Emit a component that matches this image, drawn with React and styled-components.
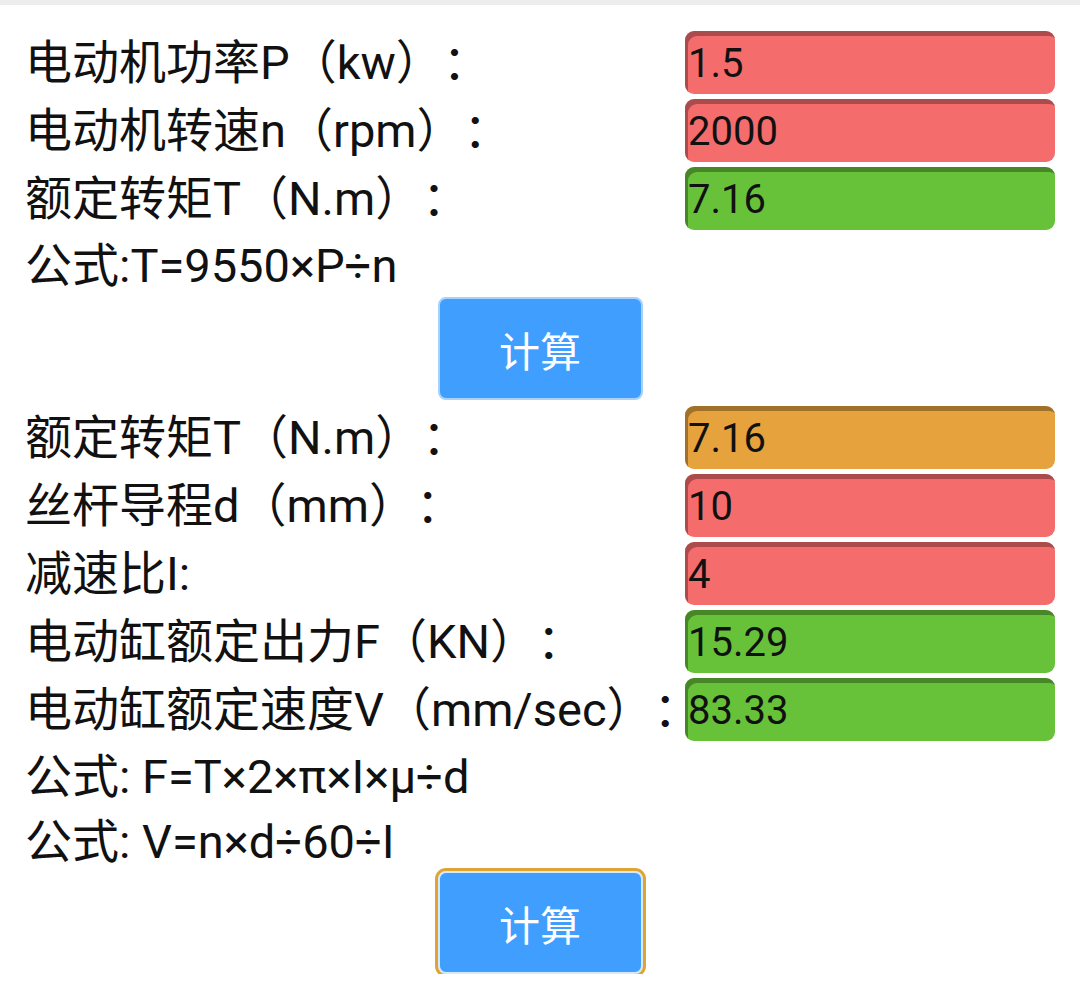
import React from "react";
import styled, { createGlobalStyle } from "styled-components";

const GlobalStyle = createGlobalStyle`
  body {
    margin: 0;
    background: #fff;
    font-family: Roboto, "Noto Sans CJK SC", sans-serif;
    color: #111;
    text-spacing-trim: space-all;
  }
`;

const tones = {
  danger: "#f56c6c",
  success: "#67c23a",
  warning: "#e6a23c",
};

const TopStrip = styled.div`
  height: 5px;
  background: #ededed;
`;

const Page = styled.div`
  padding: 26px 25px 0 25px;
`;

const Section = styled.div`
  display: grid;
  grid-template-columns: 660px 370px;
  row-gap: 5px;
`;

const Label = styled.div`
  font-size: 47px;
  line-height: 63px;
  height: 63px;
  white-space: nowrap;
  color: #111;
  text-spacing-trim: space-all;
  font-variant-east-asian: full-width;
`;

const Field = styled.input`
  box-sizing: border-box;
  width: 100%;
  height: 63px;
  margin: 0;
  border: none;
  border-radius: 9px;
  padding: 2px 0 0 3px;
  background: ${props => tones[props.$tone]};
  box-shadow: inset 3px 5px 0 rgba(0, 0, 0, 0.3);
  font-family: Roboto, sans-serif;
  font-size: 40px;
  color: #111;
  outline: none;
`;

const Formula = styled.div`
  grid-column: 1 / -1;
  font-size: 47px;
  line-height: ${props => props.$h}px;
  height: ${props => props.$h}px;
  white-space: nowrap;
  color: #111;
`;

const ButtonRow = styled.div`
  display: flex;
  justify-content: center;
  margin: ${props => props.$margin};
`;

const CalcButton = styled.button`
  box-sizing: border-box;
  width: 205px;
  height: 103px;
  border: 2px solid ${props => (props.$focused ? "#d6e8fc" : "#a9d1fb")};
  border-radius: 8px;
  background: #409eff;
  color: #fff;
  font-family: "Noto Sans CJK SC", sans-serif;
  font-size: 41px;
  cursor: pointer;
  outline: ${props => (props.$focused ? "3px solid #dfa534" : "none")};
  outline-offset: 0;
`;

const motorRows = [
  { label: "电动机功率P（kw）：", value: "1.5", tone: "danger" },
  { label: "电动机转速n（rpm）：", value: "2000", tone: "danger" },
  { label: "额定转矩T（N.m）：", value: "7.16", tone: "success" },
];

const cylinderRows = [
  { label: "额定转矩T（N.m）：", value: "7.16", tone: "warning" },
  { label: "丝杆导程d（mm）：", value: "10", tone: "danger" },
  { label: "减速比I:", value: "4", tone: "danger" },
  { label: "电动缸额定出力F（KN）：", value: "15.29", tone: "success" },
  { label: "电动缸额定速度V（mm/sec）：", value: "83.33", tone: "success" },
];

const Rows = ({ rows }) =>
  rows.map(row => (
    <React.Fragment key={row.label}>
      <Label>{row.label}</Label>
      <Field $tone={row.tone} defaultValue={row.value} />
    </React.Fragment>
  ));

export default function App() {
  return (
    <>
      <GlobalStyle />
      <TopStrip />
      <Page lang="zh-CN">
        <Section>
          <Rows rows={motorRows} />
          <Formula $h={62}>公式:T=9550×P÷n</Formula>
        </Section>
        <ButtonRow $margin="0 0 6px 0">
          <CalcButton>计算</CalcButton>
        </ButtonRow>
        <Section>
          <Rows rows={cylinderRows} />
          <Formula $h={62}>公式: F=T×2×π×I×μ÷d</Formula>
          <Formula $h={58}>公式: V=n×d÷60÷I</Formula>
        </Section>
        <ButtonRow $margin="0">
          <CalcButton $focused>计算</CalcButton>
        </ButtonRow>
      </Page>
    </>
  );
}
